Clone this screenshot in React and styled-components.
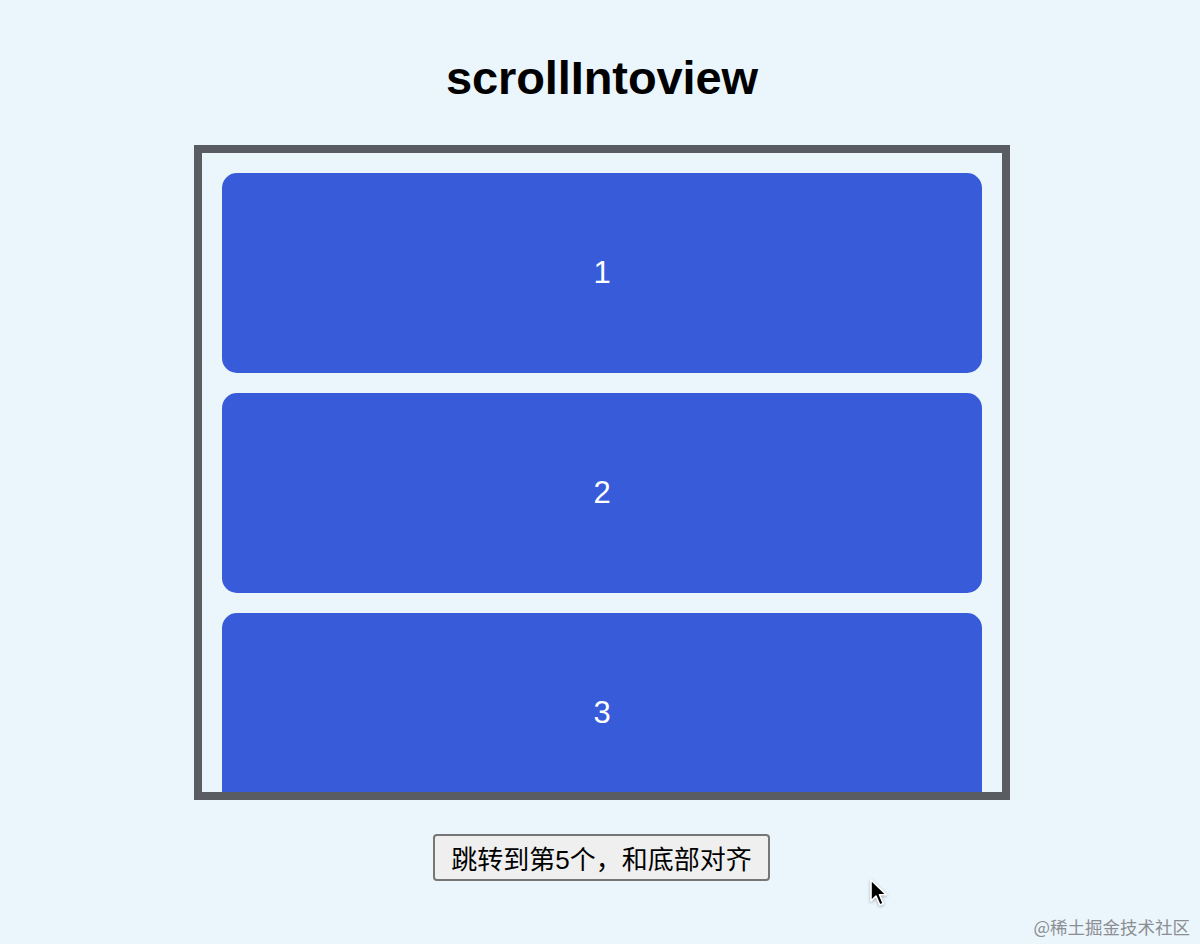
import React, { useRef } from 'react';
import styled, { createGlobalStyle } from 'styled-components';

const GlobalStyle = createGlobalStyle`
    html, body {
        margin: 0;
        padding: 0;
        background: #ebf5fc;
    }
    body {
        font-family: "Liberation Sans", Arial, "Noto Sans CJK SC", sans-serif;
    }
`;

const items = [1, 2, 3, 4, 5];

const App = () => {
    const listRef = useRef(null);

    const handleJump = () => {
        const target = listRef.current?.children[4];
        if (target) {
            target.scrollIntoView({ behavior: 'smooth', block: 'end' });
        }
    };

    return (
        <>
            <GlobalStyle />
            <Page>
                <Title>scrollIntoview</Title>
                <ScrollBox ref={listRef}>
                    {items.map((n) => (
                        <Item key={n}>{n}</Item>
                    ))}
                </ScrollBox>
                <JumpButton onClick={handleJump}>跳转到第5个，和底部对齐</JumpButton>
            </Page>
            <Cursor viewBox="0 0 20 30" aria-hidden="true">
                <path
                    d="M2 2 L2 23 L7 18 L10.8 27 L14.2 25.5 L10.5 16.8 L17.5 16.8 Z"
                    fill="#000"
                    stroke="#fff"
                    strokeWidth="1.6"
                    strokeLinejoin="round"
                />
            </Cursor>
            <Watermark>@稀土掘金技术社区</Watermark>
        </>
    );
};

export default App;

const Page = styled.div`
    display: flex;
    flex-direction: column;
    align-items: center;
    padding-top: 50px;
    height: 944px;
    box-sizing: border-box;
    overflow: hidden;
`;

const Title = styled.h1`
    margin: 0 0 39px;
    font-family: "Liberation Sans", Arial, sans-serif;
    font-size: 47px;
    font-weight: 700;
    line-height: 56px;
    color: #000;
    letter-spacing: -0.1px;
    margin-left: 4px;
`;

const ScrollBox = styled.div`
    width: 760px;
    height: 619px;
    padding: 20px 20px 0;
    border: 8px solid #595d62;
    overflow: hidden;
    display: flex;
    flex-direction: column;
    gap: 20px;
    flex-shrink: 0;
    margin-left: 4px;
`;

const Item = styled.div`
    flex-shrink: 0;
    height: 200px;
    border-radius: 15px;
    background: #375bd9;
    color: #fff;
    display: flex;
    align-items: center;
    justify-content: center;
    font-family: "Liberation Sans", Arial, sans-serif;
    font-size: 31px;
`;

const JumpButton = styled.button`
    margin-top: 34px;
    height: 47px;
    padding: 0 16px;
    background: #efefef;
    border: 2px solid #767676;
    border-radius: 4px;
    font-family: "Liberation Sans", Arial, "Noto Sans CJK SC", sans-serif;
    font-size: 26px;
    color: #000;
    cursor: pointer;
    margin-left: 3px;
`;

const Cursor = styled.svg`
    position: absolute;
    left: 869px;
    top: 878px;
    width: 20px;
    height: 30px;
    filter: drop-shadow(0 1px 1.5px rgba(0, 0, 0, 0.3));
`;

const Watermark = styled.div`
    position: absolute;
    right: 10px;
    top: 914px;
    font-family: "Noto Sans CJK SC", sans-serif;
    font-size: 17.5px;
    line-height: 26px;
    color: #8b8e92;
`;
